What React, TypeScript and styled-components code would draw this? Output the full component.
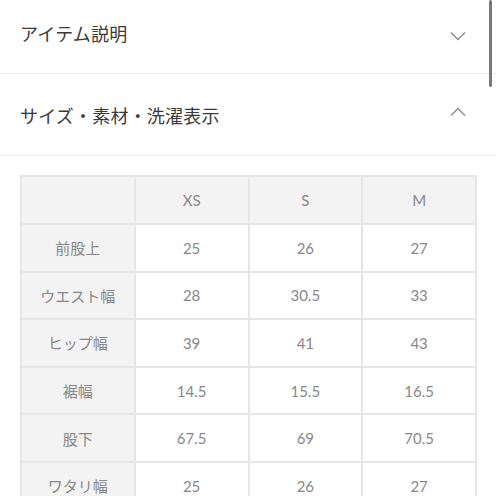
import styled, {createGlobalStyle} from "styled-components";

const GlobalStyle = createGlobalStyle`
  html, body {
    margin: 0;
    padding: 0;
    background: #fff;
    overflow: hidden;
  }
  body {
    font-family: "Lato", "Noto Sans CJK JP", sans-serif;
  }
`;

const Page = styled.div`
  position: relative;
  width: 496px;
  height: 496px;
  overflow: hidden;
`;

const Scroller = styled.div`
  margin-top: -8px;
`;

const Section = styled.section`
  border-bottom: 1px solid #ececec;
`;

const SectionHeader = styled.div`
  height: 81px;
  display: flex;
  align-items: center;
  justify-content: space-between;
  padding: 0 30px 0 20px;
`;

const Title = styled.h2`
  margin: 0;
  font-family: "Noto Sans CJK JP", sans-serif;
  font-size: 18px;
  font-weight: 400;
  color: #3a3a3a;
  letter-spacing: 0.2px;
`;

const Chevron = styled.svg<{up?: boolean}>`
  width: 16px;
  height: 10px;
  margin-top: ${({up}) => (up ? "-6px" : "6px")};
  transform: ${({up}) => (up ? "rotate(180deg)" : "none")};
`;

const Body = styled.div`
  padding: 19px 19px 0 20px;
`;

const Table = styled.table`
  width: 457px;
  border-collapse: collapse;
  table-layout: fixed;
  border: 2px solid #e6e6e6;
`;

const Cell = styled.td<{head?: boolean}>`
  height: 45.6px;
  padding: 0;
  border: 2px solid #e6e6e6;
  background: ${({head}) => (head ? "#f3f3f3" : "#fff")};
  color: #888;
  font-family: "Lato", "Noto Sans CJK JP", sans-serif;
  font-size: 15px;
  text-align: center;
  vertical-align: middle;
`;

const HeaderCell = styled(Cell)`
  height: 46px;
`;

const Scrollbar = styled.div`
  position: absolute;
  top: 0;
  right: 4px;
  width: 3px;
  height: 87px;
  background: #7a7a7a;
  border-radius: 2px;
`;

const sizes = ["XS", "S", "M"];

const rows: [string, string[]][] = [
  ["前股上", ["25", "26", "27"]],
  ["ウエスト幅", ["28", "30.5", "33"]],
  ["ヒップ幅", ["39", "41", "43"]],
  ["裾幅", ["14.5", "15.5", "16.5"]],
  ["股下", ["67.5", "69", "70.5"]],
  ["ワタリ幅", ["25", "26", "27"]],
  ["裾口", ["20", "21", "22"]],
];

const ChevronIcon = ({up}: {up?: boolean}) => (
  <Chevron up={up} viewBox="0 0 16 10">
    <path d="M1 1.5 L8 8.5 L15 1.5" fill="none" stroke="#8a8a8a" strokeWidth="1.4" />
  </Chevron>
);

export default function App() {
  return (
    <Page>
      <GlobalStyle />
      <Scroller>
        <Section>
          <SectionHeader>
            <Title>アイテム説明</Title>
            <ChevronIcon />
          </SectionHeader>
        </Section>
        <Section>
          <SectionHeader>
            <Title>サイズ・素材・洗濯表示</Title>
            <ChevronIcon up />
          </SectionHeader>
        </Section>
        <Body>
          <Table>
            <tbody>
              <tr>
                <HeaderCell head />
                {sizes.map((s) => (
                  <HeaderCell head key={s}>
                    {s}
                  </HeaderCell>
                ))}
              </tr>
              {rows.map(([label, values]) => (
                <tr key={label}>
                  <Cell head>{label}</Cell>
                  {values.map((v, i) => (
                    <Cell key={i}>{v}</Cell>
                  ))}
                </tr>
              ))}
            </tbody>
          </Table>
        </Body>
      </Scroller>
      <Scrollbar />
    </Page>
  );
}
